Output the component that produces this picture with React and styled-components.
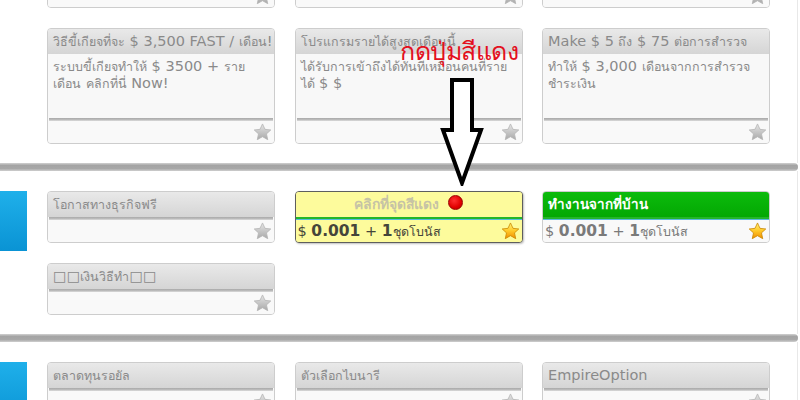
import React from "react";
import styled, { createGlobalStyle } from "styled-components";

const GlobalStyle = createGlobalStyle`
  html, body {
    margin: 0;
    padding: 0;
    background: #fff;
    overflow: hidden;
  }
  body {
    font-family: "DejaVu Sans", "Noto Sans", sans-serif;
  }
`;

const Page = styled.div`
  position: relative;
  width: 800px;
  height: 400px;
  overflow: hidden;
`;

const Sheet = styled.div`
  margin-top: -136px;
`;

const Section = styled.section`
  width: 798px;
  background: #fff;
`;

const Bar = styled.div`
  height: 8px;
  border-radius: 0 4px 4px 0;
  background: linear-gradient(#d2d2d2, #a4a4a4 30%, #a8a8a8 70%, #cfcfcf);
`;

const Content = styled.div`
  display: flex;
  padding: 20px 0 19px;
  border-right: 1px solid #e8e8e8;
`;

const Tab = styled.div`
  flex: 0 0 27px;
  height: 60px;
  background: linear-gradient(#1fb0ea, #0a93d4);
`;

const Grid = styled.div`
  display: grid;
  grid-template-columns: repeat(3, 228px);
  column-gap: 19.5px;
  row-gap: 20px;
  margin-left: 20px;
  align-items: start;
`;

const Thai = styled.span`
  font-size: ${(p) => (p.$large ? "0.96em" : "0.86em")};
`;

const Card = styled.div`
  display: flex;
  flex-direction: column;
  border: ${(p) => (p.$tone === "yellow" ? "1.5px solid #5e5e5e" : "1px solid #cdcdcd")};
  border-radius: 4px;
  background: ${(p) => (p.$tone === "yellow" ? "#fdfb9c" : "#f8f8f8")};
  overflow: hidden;
  box-shadow: ${(p) => (p.$tone === "yellow" ? "1px 1px 2px rgba(0,0,0,0.25)" : "none")};
`;

const Title = styled.div`
  height: 25px;
  line-height: 25px;
  padding: 0 5px;
  font-size: ${(p) => (p.$tone === "green" ? "14px" : "14.5px")};
  font-weight: ${(p) => (p.$tone === "plain" ? "normal" : "bold")};
  white-space: nowrap;
  overflow: hidden;
  text-align: ${(p) => (p.$tone === "yellow" ? "center" : "left")};
  color: ${(p) =>
    p.$tone === "green" ? "#fff" : p.$tone === "yellow" ? "#c6c3a6" : "#8a8a8a"};
  background: ${(p) =>
    p.$tone === "green"
      ? "linear-gradient(#0cbb0c, #03a803)"
      : p.$tone === "yellow"
      ? "#fdfb9c"
      : "linear-gradient(#e9e9e9, #d5d5d5)"};
`;

const RedDot = styled.span`
  display: inline-block;
  width: 13px;
  height: 13px;
  margin-left: 9px;
  border-radius: 50%;
  vertical-align: -1px;
  background: radial-gradient(circle at 40% 35%, #ff3030, #e00000 60%, #b00000);
  border: 1px solid #900;
`;

const Body = styled.div`
  height: 64px;
  padding: 4px 5px 0;
  box-sizing: border-box;
  font-size: 14.5px;
  line-height: 17px;
  color: #8a8a8a;
`;

const Separator = styled.div`
  height: 3px;
  background: ${(p) =>
    p.$tone === "plain"
      ? "linear-gradient(#a9a9a9, #bdbdbd 60%, #dedede)"
      : "linear-gradient(#25b52a 0 50%, #57b8dc 50% 100%)"};
  margin: ${(p) => (p.$tone === "plain" ? "0 1px" : "0")};
`;

const Footer = styled.div`
  display: flex;
  align-items: center;
  justify-content: space-between;
  height: 22px;
  padding: 0 2px;
  font-size: 14.5px;
  color: ${(p) => (p.$tone === "yellow" ? "#45453a" : "#7a7a7a")};
  background: ${(p) => (p.$tone === "yellow" ? "#fdfb9c" : "#f9f9f9")};
  white-space: nowrap;
`;

const Price = styled.span`
  b {
    font-size: 15.5px;
  }
`;

const Annotation = styled.div`
  position: absolute;
  left: 400px;
  top: 34px;
  font-size: 25px;
  line-height: 34px;
  letter-spacing: -0.5px;
  color: #e3101e;
  white-space: nowrap;
  font-family: "Liberation Sans", "Noto Sans", sans-serif;
`;

const ArrowWrap = styled.div`
  position: absolute;
  left: 440px;
  top: 78px;
  width: 44px;
  height: 108px;
`;

// wrap runs of Thai letters so they can be sized apart from Latin text
function th(text, large) {
  return text.split(/([\u0E00-\u0E7F]+)/).map((part, i) =>
    /[\u0E00-\u0E7F]/.test(part) ? (
      <Thai key={i} $large={large}>
        {part}
      </Thai>
    ) : (
      part
    )
  );
}

function Star({ gold }) {
  const id = gold ? "starGold" : "starGray";
  return (
    <svg width="19" height="18" viewBox="0 0 24 23">
      <defs>
        <linearGradient id={id} x1="0" y1="0" x2="0" y2="1">
          {gold ? (
            <>
              <stop offset="0" stopColor="#fff27a" />
              <stop offset="0.5" stopColor="#ffc928" />
              <stop offset="1" stopColor="#f08c00" />
            </>
          ) : (
            <>
              <stop offset="0" stopColor="#e6e6e6" />
              <stop offset="0.55" stopColor="#c4c4c4" />
              <stop offset="1" stopColor="#a9a9a9" />
            </>
          )}
        </linearGradient>
      </defs>
      <path
        d="M12 1.2l3.2 6.9 7.4.8-5.5 5 1.6 7.4L12 17.5l-6.7 3.8 1.6-7.4-5.5-5 7.4-.8z"
        fill={`url(#${id})`}
        stroke={gold ? "#c98600" : "#b5b5b5"}
        strokeWidth="1"
        strokeLinejoin="round"
      />
    </svg>
  );
}

function PriceLine() {
  return (
    <Price>
      $ <b>0.001</b> + <b>1</b>
      {th("ชุดโบนัส")}
    </Price>
  );
}

function Offer({ title, body, tone = "plain", price, dot }) {
  return (
    <Card $tone={tone}>
      <Title $tone={tone}>
        {th(title, tone !== "plain")}
        {dot && <RedDot />}
      </Title>
      {body && <Body>{th(body)}</Body>}
      <Separator $tone={tone} />
      <Footer $tone={tone}>
        <span>{price && <PriceLine />}</span>
        <Star gold={tone !== "plain"} />
      </Footer>
    </Card>
  );
}

const hidden = [
  { title: "รายได้เสริมออนไลน์", body: "ทำงานที่บ้าน รายได้ดี" },
  { title: "โปรแกรมพันธมิตร", body: "สมัครฟรี วันนี้" },
  { title: "สำรวจออนไลน์", body: "รับเงินจากการสำรวจ" },
];

const topOffers = [
  {
    title: "วิธีขี้เกียจที่จะ $ 3,500 FAST / เดือน!",
    body: "ระบบขี้เกียจทำให้ $ 3500 + ราย เดือน คลิกที่นี่ Now!",
  },
  {
    title: "โปรแกรมรายได้สูงสุดเดือนนี้",
    body: "ได้รับการเข้าถึงได้ทันทีเหมือนคนที่รายได้ $ $",
  },
  {
    title: "Make $ 5 ถึง $ 75 ต่อการสำรวจ",
    body: "ทำให้ $ 3,000 เดือนจากการสำรวจ ชำระเงิน",
  },
];

export default function App() {
  return (
    <Page>
      <GlobalStyle />
      <Sheet>
        <Section>
          <Bar />
          <Content>
            <Tab />
            <Grid>
              {hidden.concat(topOffers).map((o, i) => (
                <Offer key={i} title={o.title} body={o.body} />
              ))}
            </Grid>
          </Content>
        </Section>
        <Section>
          <Bar />
          <Content>
            <Tab />
            <Grid>
              <Offer title="โอกาสทางธุรกิจฟรี" />
              <Offer title="คลิกที่จุดสีแดง" tone="yellow" price dot />
              <Offer title="ทำงานจากที่บ้าน" tone="green" price />
              <Offer title="□□เงินวิธีทำ□□" />
            </Grid>
          </Content>
        </Section>
        <Section>
          <Bar />
          <Content>
            <Tab />
            <Grid>
              <Offer title="ตลาดทุนรอยัล" />
              <Offer title="ตัวเลือกไบนารี" />
              <Offer title="EmpireOption" />
            </Grid>
          </Content>
        </Section>
      </Sheet>
      <Annotation>กดปุ่มสีแดง</Annotation>
      <ArrowWrap>
        <svg width="44" height="108" viewBox="0 0 44 108">
          <path
            d="M12 2 H32 V52 H41 L22 105 L3 52 H12 Z"
            fill="#fff"
            stroke="#000"
            strokeWidth="4"
            strokeLinejoin="miter"
          />
        </svg>
      </ArrowWrap>
    </Page>
  );
}
